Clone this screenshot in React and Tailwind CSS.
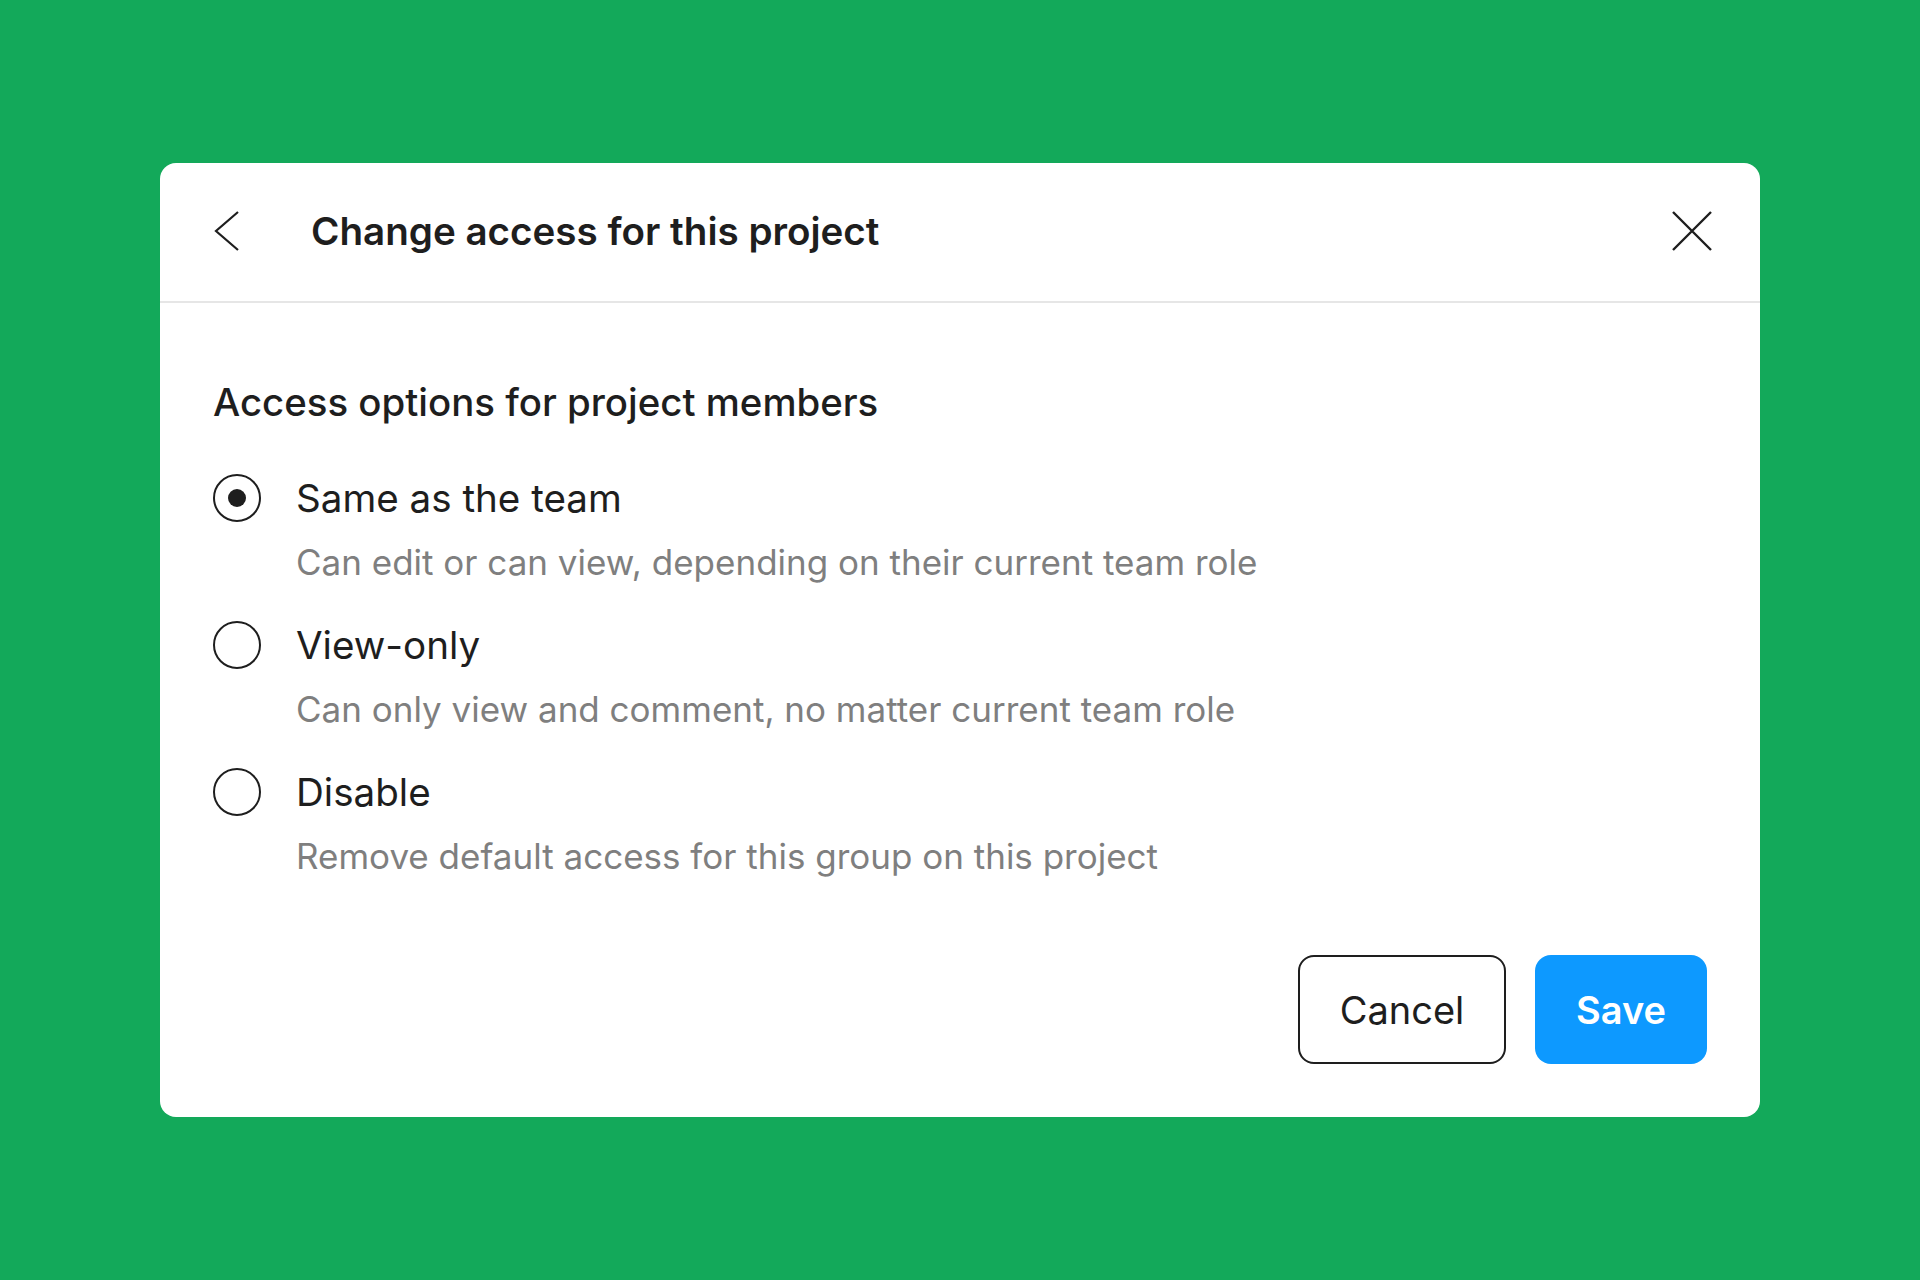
import React, { useState } from "react";

const options = [
  {
    id: "team",
    label: "Same as the team",
    desc: "Can edit or can view, depending on their current team role",
  },
  {
    id: "view",
    label: "View-only",
    desc: "Can only view and comment, no matter current team role",
  },
  {
    id: "disable",
    label: "Disable",
    desc: "Remove default access for this group on this project",
  },
];

function Radio({ checked }) {
  return (
    <span className="flex h-[48px] w-[48px] shrink-0 items-center justify-center rounded-full border-[2.5px] border-[#1e1e1e]">
      {checked && <span className="h-[18px] w-[18px] rounded-full bg-[#1e1e1e]" />}
    </span>
  );
}

export default function App() {
  const [value, setValue] = useState("team");

  return (
    <div
      className="flex min-h-screen w-full items-center justify-center bg-[#13a95a]"
      style={{ fontFamily: "Inter, 'Noto Sans', sans-serif" }}
    >
      <div className="w-[1600px] rounded-[16px] bg-white text-[#1e1e1e]">
        {/* header */}
        <div className="flex h-[140px] items-center border-b-2 border-[#e6e6e6] pb-[3px] pl-[54px] pr-[48px]">
          <button className="flex h-[40px] w-[26px] items-center justify-center">
            <svg width="26" height="40" viewBox="0 0 26 40" fill="none">
              <path d="M24 1 L2 20 L24 39" stroke="#1e1e1e" strokeWidth="2.2" />
            </svg>
          </button>
          <h1 className="ml-[71px] text-[38.6px] font-semibold leading-[46px]">
            Change access for this project
          </h1>
          <button className="ml-auto flex h-[40px] w-[40px] items-center justify-center">
            <svg width="40" height="40" viewBox="0 0 40 40" fill="none">
              <path d="M1 1 L39 39 M39 1 L1 39" stroke="#1e1e1e" strokeWidth="2.4" />
            </svg>
          </button>
        </div>

        {/* body */}
        <div className="px-[53px] pb-[53px] pt-[79px]">
          <h2 className="text-[38.4px] font-medium leading-[40px]">
            Access options for project members
          </h2>

          <div className="mt-[52px] flex flex-col gap-[39px]">
            {options.map((o) => (
              <label
                key={o.id}
                className="flex cursor-pointer flex-col"
                onClick={() => setValue(o.id)}
              >
                <div className="flex items-center gap-[35px]">
                  <Radio checked={value === o.id} />
                  <span className="text-[38.6px] leading-[48px]">{o.label}</span>
                </div>
                <div className="mt-[20px] pl-[83px] text-[35px] leading-[40px] text-[#7f7f7f]">
                  {o.desc}
                </div>
              </label>
            ))}
          </div>

          <div className="mt-[79px] flex justify-end gap-[29px]">
            <button className="h-[109px] w-[208px] rounded-[16px] border-[2.5px] border-[#1e1e1e] text-[38px] leading-none">
              Cancel
            </button>
            <button className="h-[109px] w-[172px] rounded-[16px] bg-[#0d99ff] text-[38px] font-semibold leading-none text-white">
              Save
            </button>
          </div>
        </div>
      </div>
    </div>
  );
}
